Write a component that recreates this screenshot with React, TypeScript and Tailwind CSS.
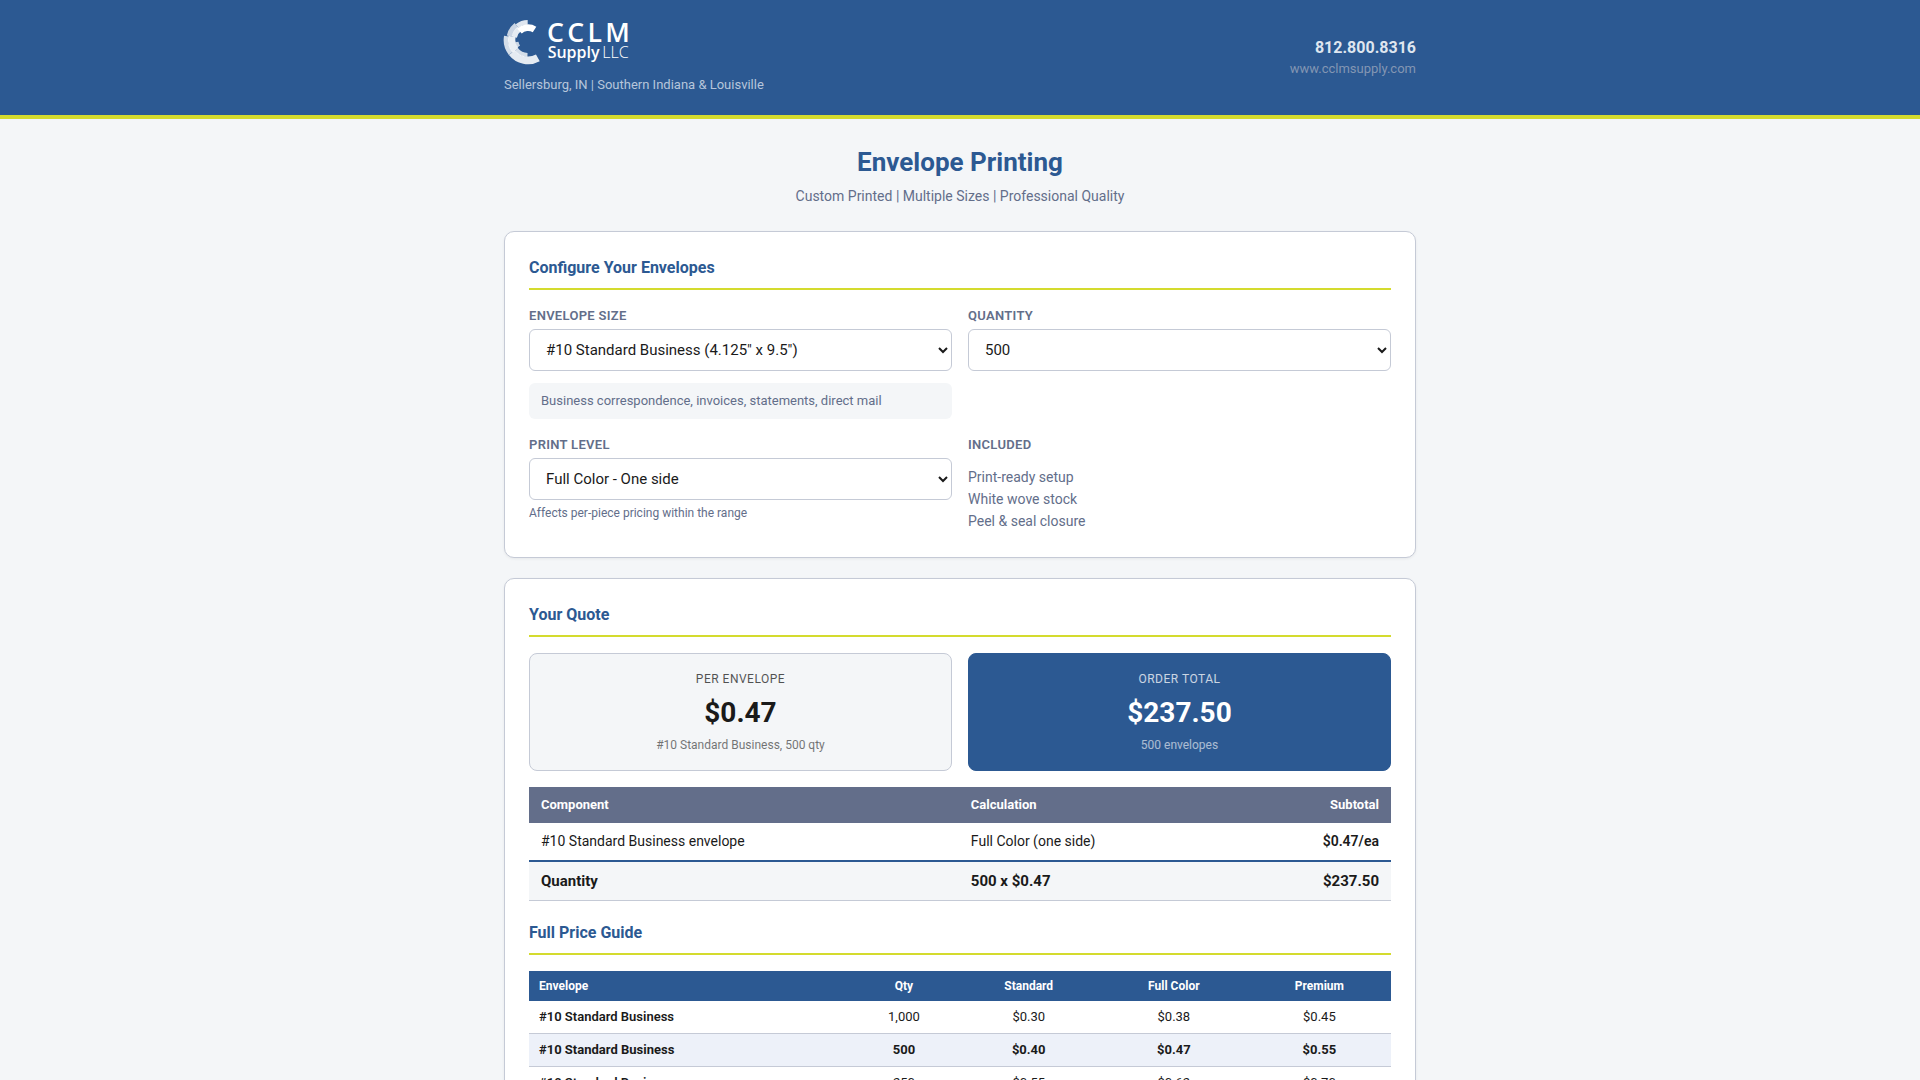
import * as React from 'react';
import { clsx } from 'clsx';

interface ArcProps {
  r: number
  width: number
  from: number
  to: number
  opacity: number
}

// ring segment around the emblem centre, angles in degrees clockwise from 3 o'clock
function Arc(props: ArcProps) {
  const point = (deg: number) => {
    const rad = (deg * Math.PI) / 180;
    return `${114 + props.r * Math.cos(rad)} ${120 + props.r * Math.sin(rad)}`;
  };
  return (
    <path
      d={`M${point(props.from)}A${props.r} ${props.r} 0 0 1 ${point(props.to)}`}
      fill="none"
      stroke="#fff"
      strokeWidth={props.width}
      strokeOpacity={props.opacity}
    />
  );
}

function Logo() {
  return (
    <svg viewBox="42 60 378 132" className="block h-11 w-[126px] overflow-visible" role="img" aria-label="CCLM Supply LLC">
      <Arc r={61} width={23} from={61} to={142} opacity={0.88} />
      <Arc r={66} width={14} from={142} to={190} opacity={0.8} />
      <Arc r={49} width={22} from={140} to={192} opacity={0.9} />
      <Arc r={45} width={12} from={92} to={140} opacity={0.8} />
      <Arc r={34} width={10} from={145} to={170} opacity={0.75} />
      <Arc r={57} width={16} from={192} to={232} opacity={0.75} />
      <Arc r={42} width={16} from={192} to={232} opacity={0.88} />
      <Arc r={53} width={14} from={232} to={269} opacity={0.85} />
      <Arc r={37} width={20} from={226} to={302} opacity={1} />
      <g fill="#fff" fontFamily="'Open Sans', 'Noto Sans', sans-serif">
        <text x="171" y="126" fontSize="80" fontWeight="600" letterSpacing="10">CCLM</text>
        <text x="173" y="174" fontSize="48" fontWeight="600">Supply</text>
        <text x="337" y="174" fontSize="48" fontWeight="300">LLC</text>
      </g>
    </svg>
  );
}

interface CardProps {
  children: React.ReactNode
}

function Card(props: CardProps) {
  return (
    <section className="mb-5 rounded-[10px] border border-[#c5cad6] bg-white p-6 shadow-[0_1px_3px_rgba(0,0,0,0.06)]">
      {props.children}
    </section>
  );
}

interface SectionTitleProps {
  children: React.ReactNode
  className?: string
}

function SectionTitle(props: SectionTitleProps) {
  return (
    <h2 className={clsx('mb-4 border-b-2 border-[#d4db2e] pb-2 text-base leading-6 font-bold text-[#2c5992]', props.className)}>
      {props.children}
    </h2>
  );
}

const labelClass = 'mb-1 block text-[13px] leading-[19px] font-semibold tracking-[0.3px] text-[#636e8a] uppercase';

interface SelectFieldProps {
  id: string
  label: string
  options: string[]
  value: string
  onChange: (value: string) => void
  children?: React.ReactNode
}

function SelectField(props: SelectFieldProps) {
  return (
    <div>
      <label htmlFor={props.id} className={labelClass}>{props.label}</label>
      <select
        id={props.id}
        value={props.value}
        onChange={(e) => props.onChange(e.target.value)}
        className="block h-[42px] w-full rounded-md border border-[#c5cad6] bg-white px-3 text-[15px] text-[#1a1a1a]"
      >
        {props.options.map((option) => <option key={option}>{option}</option>)}
      </select>
      {props.children}
    </div>
  );
}

interface QuoteBoxProps {
  label: string
  value: string
  note: string
  primary?: boolean
}

function QuoteBox(props: QuoteBoxProps) {
  return (
    <div
      className={clsx(
        'rounded-lg border p-4 text-center',
        props.primary ? 'border-[#2c5992] bg-[#2c5992] text-white' : 'border-[#c5cad6] bg-[#f4f6f8] text-[#1a1a1a]',
      )}
    >
      <div className="text-xs leading-[18px] tracking-[0.5px] uppercase opacity-75">{props.label}</div>
      <div className="mt-1.5 mb-1 text-[28px] leading-[38px] font-bold">{props.value}</div>
      <div className="text-xs leading-[18px] opacity-60">{props.note}</div>
    </div>
  );
}

const sizes = ['#10 Standard Business (4.125" x 9.5")'];
const quantities = ['250', '500', '1,000'];
const levels = ['Standard', 'Full Color - One side', 'Premium'];

const prices = [
  { name: '#10 Standard Business', cells: ['1,000', '$0.30', '$0.38', '$0.45'] },
  { name: '#10 Standard Business', cells: ['500', '$0.40', '$0.47', '$0.55'] },
  { name: '#10 Standard Business', cells: ['250', '$0.55', '$0.62', '$0.70'] },
];

export default function App() {
  const [size, setSize] = React.useState(sizes[0]);
  const [quantity, setQuantity] = React.useState('500');
  const [level, setLevel] = React.useState(levels[1]);

  return (
    <div className="min-h-screen bg-[#f4f6f8] font-[Roboto,sans-serif] text-[#1a1a1a]">
      <header className="border-b-4 border-[#d4db2e] bg-[#2c5992] py-5">
        <div className="mx-auto flex max-w-[960px] items-center justify-between px-6">
          <div>
            <Logo />
            <p className="mt-[10px] text-[13px] leading-[21px] text-[#b7c6db]">Sellersburg, IN | Southern Indiana &amp; Louisville</p>
          </div>
          <div className="text-right">
            <a href="tel:8128008316" className="block text-base leading-[23px] font-bold text-[#dfe6ef]">812.800.8316</a>
            <a href="#" className="block text-[13px] leading-5 text-[#8396b3]">www.cclmsupply.com</a>
          </div>
        </div>
      </header>

      <main className="mx-auto max-w-[960px] px-6 pt-6">
        <div className="mb-6 text-center">
          <h1 className="mb-1 text-[26px] leading-[38px] font-bold text-[#2c5992]">Envelope Printing</h1>
          <p className="text-sm leading-[22px] text-[#636e8a]">Custom Printed | Multiple Sizes | Professional Quality</p>
        </div>

        <Card>
          <SectionTitle>Configure Your Envelopes</SectionTitle>
          <div className="grid grid-cols-2 gap-4">
            <SelectField id="size" label="Envelope Size" options={sizes} value={size} onChange={setSize}>
              <p className="mt-3 rounded-md bg-[#f4f6f8] px-3 py-2 text-[13px] leading-5 text-[#636e8a]">
                Business correspondence, invoices, statements, direct mail
              </p>
            </SelectField>
            <SelectField id="quantity" label="Quantity" options={quantities} value={quantity} onChange={setQuantity} />
            <SelectField id="level" label="Print Level" options={levels} value={level} onChange={setLevel}>
              <p className="mt-1 text-xs leading-[18px] text-[#636e8a]">Affects per-piece pricing within the range</p>
            </SelectField>
            <div>
              <h3 className={labelClass}>Included</h3>
              <ul className="pt-2 pb-px text-sm leading-[22px] text-[#636e8a]">
                <li>Print-ready setup</li>
                <li>White wove stock</li>
                <li>Peel &amp; seal closure</li>
              </ul>
            </div>
          </div>
        </Card>

        <Card>
          <SectionTitle>Your Quote</SectionTitle>
          <div className="mb-4 grid grid-cols-2 gap-4">
            <QuoteBox label="Per Envelope" value="$0.47" note="#10 Standard Business, 500 qty" />
            <QuoteBox label="Order Total" value="$237.50" note="500 envelopes" primary />
          </div>

          <table className="w-full border-collapse">
            <thead>
              <tr className="bg-[#636e8a] text-left text-[13px] leading-5 text-white">
                <th className="px-3 py-2 font-bold">Component</th>
                <th className="px-3 py-2 font-bold">Calculation</th>
                <th className="px-3 py-2 text-right font-bold">Subtotal</th>
              </tr>
            </thead>
            <tbody>
              <tr className="text-sm leading-[21px]">
                <td className="px-3 py-2">#10 Standard Business envelope</td>
                <td className="px-3 py-2">Full Color (one side)</td>
                <td className="px-3 py-2 text-right font-semibold">$0.47/ea</td>
              </tr>
              <tr className="border-t-2 border-b border-t-[#2c5992] border-b-[#c5cad6] bg-[#f4f6f8] text-[15px] leading-[22px] font-bold">
                <td className="px-3 py-2">Quantity</td>
                <td className="px-3 py-2">500 x $0.47</td>
                <td className="px-3 py-2 text-right">$237.50</td>
              </tr>
            </tbody>
          </table>

          <SectionTitle className="mt-5">Full Price Guide</SectionTitle>
          <table className="w-full border-collapse text-center text-[13px] leading-5">
            <thead>
              <tr className="bg-[#2c5992] text-xs leading-[18px] text-white">
                <th className="px-[10px] py-[6px] text-left font-bold">Envelope</th>
                <th className="px-[10px] py-[6px] font-bold">Qty</th>
                <th className="px-[10px] py-[6px] font-bold">Standard</th>
                <th className="px-[10px] py-[6px] font-bold">Full Color</th>
                <th className="px-[10px] py-[6px] font-bold">Premium</th>
              </tr>
            </thead>
            <tbody>
              {prices.map((row) => (
                <tr
                  key={row.cells[0]}
                  className={clsx('border-b border-[#c5cad6]', row.cells[0] === quantity && 'bg-[#edf1f9] font-bold')}
                >
                  <td className={clsx('px-[10px] py-[6px] text-left', row.cells[0] !== quantity && 'font-semibold')}>{row.name}</td>
                  {row.cells.map((cell) => <td key={cell} className="px-[10px] py-[6px]">{cell}</td>)}
                </tr>
              ))}
            </tbody>
          </table>
        </Card>
      </main>
    </div>
  );
}
